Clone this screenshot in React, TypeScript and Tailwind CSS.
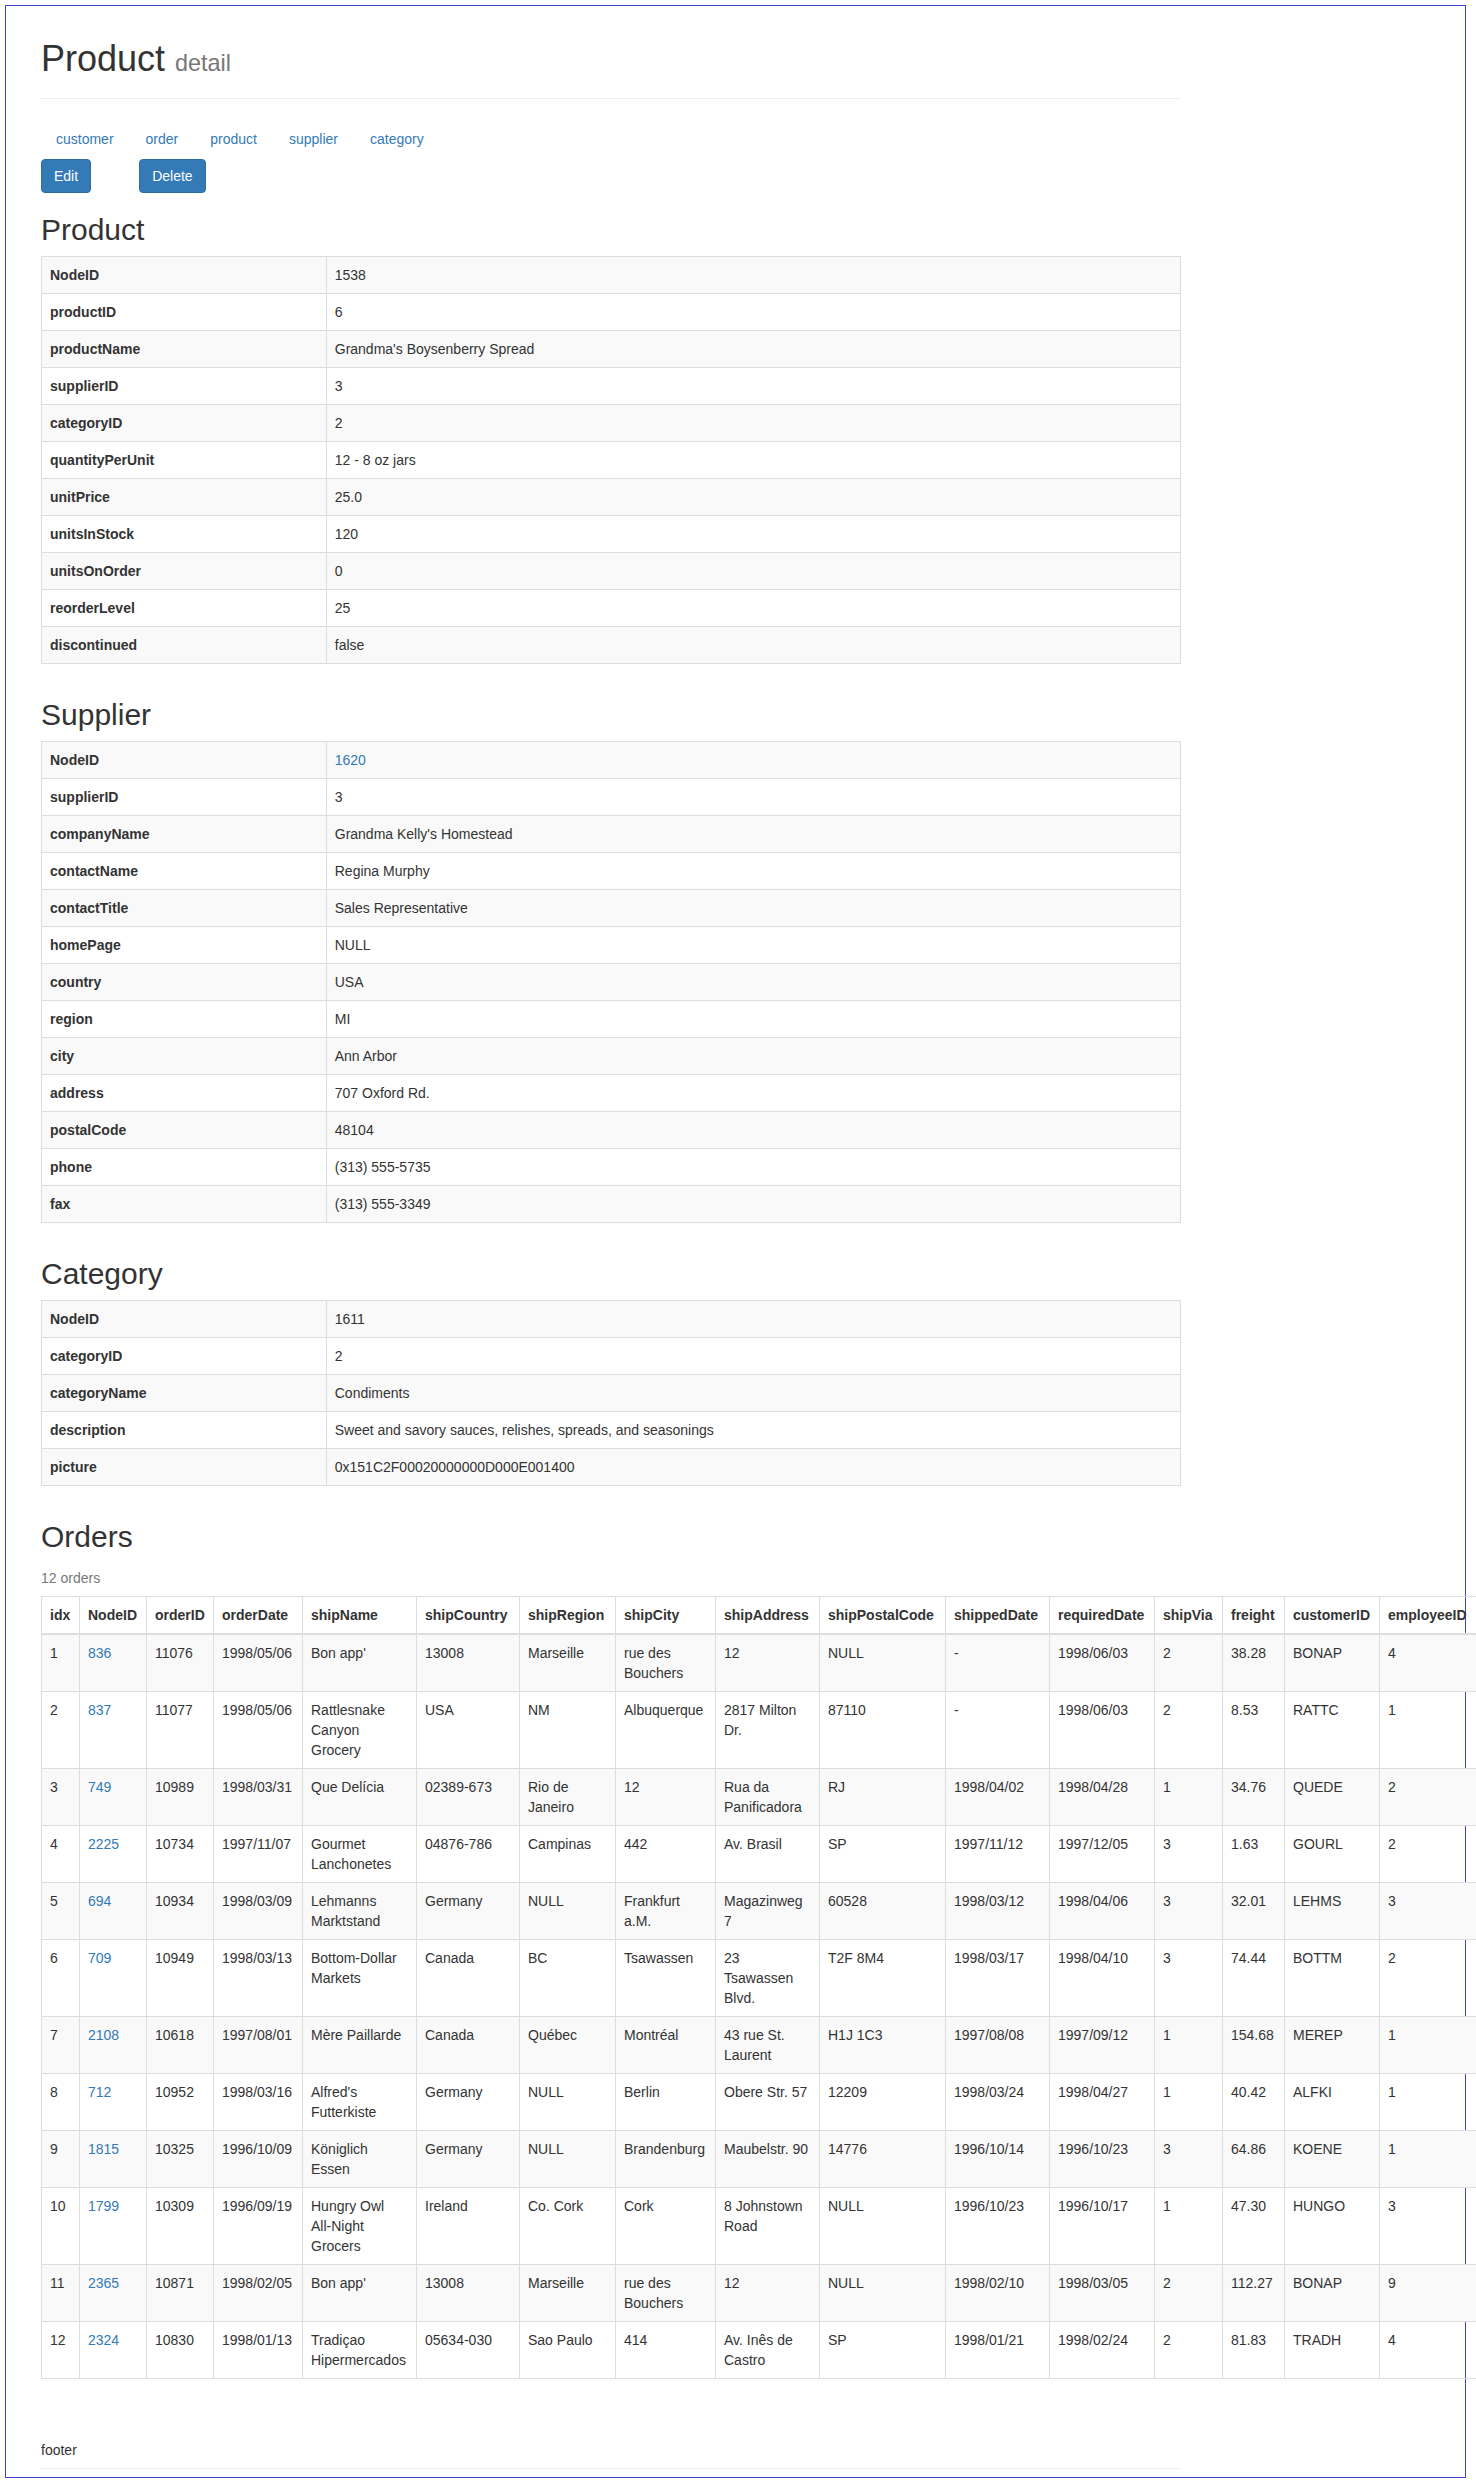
import React from "react";

type KV = [string, string, boolean?];

const productRows: KV[] = [
  ["NodeID", "1538"],
  ["productID", "6"],
  ["productName", "Grandma's Boysenberry Spread"],
  ["supplierID", "3"],
  ["categoryID", "2"],
  ["quantityPerUnit", "12 - 8 oz jars"],
  ["unitPrice", "25.0"],
  ["unitsInStock", "120"],
  ["unitsOnOrder", "0"],
  ["reorderLevel", "25"],
  ["discontinued", "false"],
];

const supplierRows: KV[] = [
  ["NodeID", "1620", true],
  ["supplierID", "3"],
  ["companyName", "Grandma Kelly's Homestead"],
  ["contactName", "Regina Murphy"],
  ["contactTitle", "Sales Representative"],
  ["homePage", "NULL"],
  ["country", "USA"],
  ["region", "MI"],
  ["city", "Ann Arbor"],
  ["address", "707 Oxford Rd."],
  ["postalCode", "48104"],
  ["phone", "(313) 555-5735"],
  ["fax", "(313) 555-3349"],
];

const categoryRows: KV[] = [
  ["NodeID", "1611"],
  ["categoryID", "2"],
  ["categoryName", "Condiments"],
  ["description", "Sweet and savory sauces, relishes, spreads, and seasonings"],
  ["picture", "0x151C2F00020000000D000E001400"],
];

const orderHeaders: [string, string][] = [
  ["idx", "w-[38px]"],
  ["NodeID", "w-[67px]"],
  ["orderID", "w-[67px]"],
  ["orderDate", "w-[89px]"],
  ["shipName", "w-[114px]"],
  ["shipCountry", "w-[103px]"],
  ["shipRegion", "w-[96px]"],
  ["shipCity", "w-[100px]"],
  ["shipAddress", "w-[104px]"],
  ["shipPostalCode", "w-[126px]"],
  ["shippedDate", "w-[104px]"],
  ["requiredDate", "w-[105px]"],
  ["shipVia", "w-[68px]"],
  ["freight", "w-[62px]"],
  ["customerID", "w-[95px]"],
  ["employeeID", "w-[97px]"],
];

const orders: string[][] = [
  ["1", "836", "11076", "1998/05/06", "Bon app'", "13008", "Marseille", "rue des Bouchers", "12", "NULL", "-", "1998/06/03", "2", "38.28", "BONAP", "4"],
  ["2", "837", "11077", "1998/05/06", "Rattlesnake Canyon Grocery", "USA", "NM", "Albuquerque", "2817 Milton Dr.", "87110", "-", "1998/06/03", "2", "8.53", "RATTC", "1"],
  ["3", "749", "10989", "1998/03/31", "Que Delícia", "02389-673", "Rio de Janeiro", "12", "Rua da Panificadora", "RJ", "1998/04/02", "1998/04/28", "1", "34.76", "QUEDE", "2"],
  ["4", "2225", "10734", "1997/11/07", "Gourmet Lanchonetes", "04876-786", "Campinas", "442", "Av. Brasil", "SP", "1997/11/12", "1997/12/05", "3", "1.63", "GOURL", "2"],
  ["5", "694", "10934", "1998/03/09", "Lehmanns Marktstand", "Germany", "NULL", "Frankfurt a.M.", "Magazinweg 7", "60528", "1998/03/12", "1998/04/06", "3", "32.01", "LEHMS", "3"],
  ["6", "709", "10949", "1998/03/13", "Bottom-Dollar Markets", "Canada", "BC", "Tsawassen", "23 Tsawassen Blvd.", "T2F 8M4", "1998/03/17", "1998/04/10", "3", "74.44", "BOTTM", "2"],
  ["7", "2108", "10618", "1997/08/01", "Mère Paillarde", "Canada", "Québec", "Montréal", "43 rue St. Laurent", "H1J 1C3", "1997/08/08", "1997/09/12", "1", "154.68", "MEREP", "1"],
  ["8", "712", "10952", "1998/03/16", "Alfred's Futterkiste", "Germany", "NULL", "Berlin", "Obere Str. 57", "12209", "1998/03/24", "1998/04/27", "1", "40.42", "ALFKI", "1"],
  ["9", "1815", "10325", "1996/10/09", "Königlich Essen", "Germany", "NULL", "Brandenburg", "Maubelstr. 90", "14776", "1996/10/14", "1996/10/23", "3", "64.86", "KOENE", "1"],
  ["10", "1799", "10309", "1996/09/19", "Hungry Owl All-Night Grocers", "Ireland", "Co. Cork", "Cork", "8 Johnstown Road", "NULL", "1996/10/23", "1996/10/17", "1", "47.30", "HUNGO", "3"],
  ["11", "2365", "10871", "1998/02/05", "Bon app'", "13008", "Marseille", "rue des Bouchers", "12", "NULL", "1998/02/10", "1998/03/05", "2", "112.27", "BONAP", "9"],
  ["12", "2324", "10830", "1998/01/13", "Tradiçao Hipermercados", "05634-030", "Sao Paulo", "414", "Av. Inês de Castro", "SP", "1998/01/21", "1998/02/24", "2", "81.83", "TRADH", "4"],
];

function DetailTable({ rows }: { rows: KV[] }) {
  return (
    <table className="w-full border-collapse">
      <tbody>
        {rows.map(([k, v, link], i) => (
          <tr key={i} className="odd:bg-[#f9f9f9]">
            <th className="w-[25%] border border-[#ddd] p-[8px] text-left align-top font-bold">{k}</th>
            <td className="border border-[#ddd] p-[8px] align-top">
              {link ? <a className="text-[#337ab7]">{v}</a> : v}
            </td>
          </tr>
        ))}
      </tbody>
    </table>
  );
}

function H2({ children, className }: { children: React.ReactNode; className: string }) {
  return <h2 className={"text-[30px] leading-[33px] font-normal " + className}>{children}</h2>;
}

function Cell({ text }: { text: string }) {
  if (text.includes("All-Night")) {
    const [a, b] = text.split("All-Night");
    return (
      <>
        {a}
        <span className="whitespace-nowrap">All-Night</span>
        {b}
      </>
    );
  }
  return <>{text}</>;
}

export default function App() {
  const links = ["customer", "order", "product", "supplier", "category"];
  return (
    <div className="bg-white pt-[5px] pl-[5px] pb-[11px] font-['Liberation_Sans',Arial,Helvetica,sans-serif] text-[14px] leading-[20px] text-[#333]">
      <div className="w-[1461px] border border-[#3f48cc] pl-[35px] pb-[8px]">
        <div className="w-[1140px]">
          <div className="mt-[33px] pb-[19px] border-b border-[#eee]">
            <h1 className="text-[36px] leading-[39.6px] font-normal">
              Product <small className="text-[23.4px] leading-none text-[#777]">detail</small>
            </h1>
          </div>

          <ul className="mt-[20px] flex gap-[2px]">
            {links.map((l) => (
              <li key={l}>
                <a className="block px-[15px] py-[10px] text-[#337ab7]">{l}</a>
              </li>
            ))}
          </ul>

          <div className="flex">
            <button className="rounded-[4px] border border-[#2e6da4] bg-[#337ab7] px-[12px] py-[6px] text-white">Edit</button>
            <button className="ml-[48px] rounded-[4px] border border-[#2e6da4] bg-[#337ab7] px-[12px] py-[6px] text-white">Delete</button>
          </div>

          <H2 className="mt-[20px] mb-[10px]">Product</H2>
          <DetailTable rows={productRows} />

          <H2 className="mt-[34px] mb-[10px]">Supplier</H2>
          <DetailTable rows={supplierRows} />

          <H2 className="mt-[34px] mb-[10px]">Category</H2>
          <DetailTable rows={categoryRows} />

          <H2 className="mt-[34px] mb-[15px]">Orders</H2>
          <p className="mb-[8px] text-[#777]">12 orders</p>
          <table className="w-[1435px] table-fixed border-collapse">
            <thead>
              <tr>
                {orderHeaders.map(([h, w]) => (
                  <th key={h} className={"border border-[#ddd] border-b-2 p-[8px] text-left align-bottom font-bold whitespace-nowrap overflow-hidden " + w}>
                    {h}
                  </th>
                ))}
              </tr>
            </thead>
            <tbody>
              {orders.map((r, i) => (
                <tr key={i} className="odd:bg-[#f9f9f9]">
                  {r.map((c, j) => (
                    <td key={j} className="border border-[#ddd] p-[8px] align-top">
                      {j === 1 ? <a className="text-[#337ab7]">{c}</a> : <Cell text={c} />}
                    </td>
                  ))}
                </tr>
              ))}
            </tbody>
          </table>

          <footer className="mt-[61px]">
            <p>footer</p>
          </footer>
          <hr className="mt-[8px] border-0 border-t border-[#eee]" />
        </div>
      </div>
    </div>
  );
}
